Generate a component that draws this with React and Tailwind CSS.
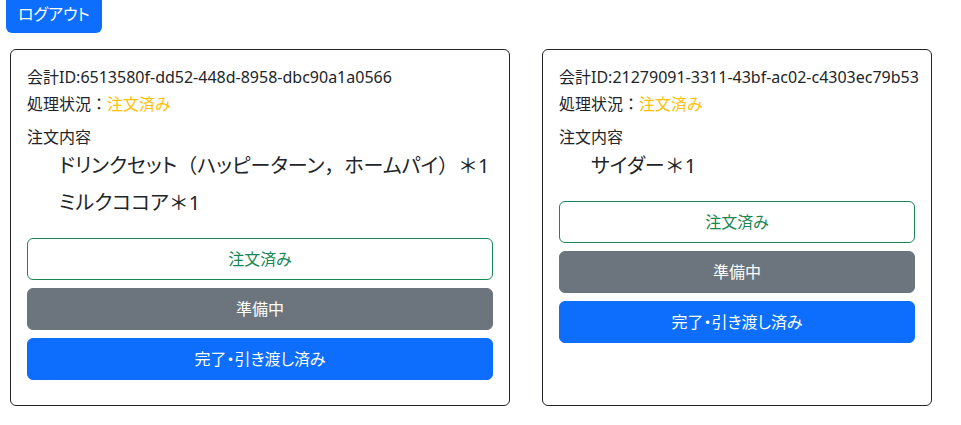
import React from "react";

const P = ({ children }) => (
  <span className="[font-feature-settings:normal]">{children}</span>
);

function Card({ width, id, items }) {
  return (
    <div
      className={`${width} flex flex-col border border-[#212529] rounded-[6px] px-4 pt-[15px] pb-[25px] text-[#212529]`}
    >
      <div className="text-[16px] leading-[24px] whitespace-nowrap">会計ID:{id}</div>
      <div className="mt-[3px] text-[16px] leading-[24px]">
        処理状況<P>：</P>
        <span className="text-[#ffc107]">注文済み</span>
      </div>
      <div className="mt-[9px] text-[16px] leading-[24px]">注文内容</div>
      <ul className="pl-8 mt-[2px] mb-[20px] flex flex-col gap-[7px]">
        {items.map((it, i) => (
          <li key={i} className="text-[20px] leading-[30px] whitespace-nowrap">
            {it}
          </li>
        ))}
      </ul>
      <div className="flex flex-col gap-2">
        <button className="h-[42px] w-full rounded-[6px] border border-[#198754] bg-white text-[16px] text-[#198754]">
          注文済み
        </button>
        <button className="h-[42px] w-full rounded-[6px] border border-[#6c757d] bg-[#6c757d] text-[16px] text-white">
          準備中
        </button>
        <button className="h-[42px] w-full rounded-[6px] border border-[#0d6efd] bg-[#0d6efd] text-[16px] text-white">
          完了・引き渡し済み
        </button>
      </div>
    </div>
  );
}

export default function App() {
  return (
    <div
      className="min-h-[425px] bg-white overflow-hidden [font-feature-settings:'palt']"
      style={{ fontFamily: "'Noto Sans', 'Noto Sans CJK JP', sans-serif" }}
    >
      <div className="flex pl-[6px] -mt-[5px]">
        <button className="h-[38px] px-3 rounded-[6px] bg-[#0d6efd] text-white text-[16px] leading-[24px]">
          ログアウト
        </button>
      </div>
      <div className="flex items-stretch gap-[32px] pl-[10px] mt-[16px]">
        <Card
          width="w-[500px]"
          id="6513580f-dd52-448d-8958-dbc90a1a0566"
          items={[
            <>
              ドリンクセット<P>（</P>ハッピーターン<P>，</P>ホームパイ<P>）</P>
              <P>＊</P>1
            </>,
            <>
              ミルクココア<P>＊</P>1
            </>,
          ]}
        />
        <Card
          width="w-[390px]"
          id="21279091-3311-43bf-ac02-c4303ec79b53"
          items={[
            <>
              サイダー<P>＊</P>1
            </>,
          ]}
        />
      </div>
    </div>
  );
}
